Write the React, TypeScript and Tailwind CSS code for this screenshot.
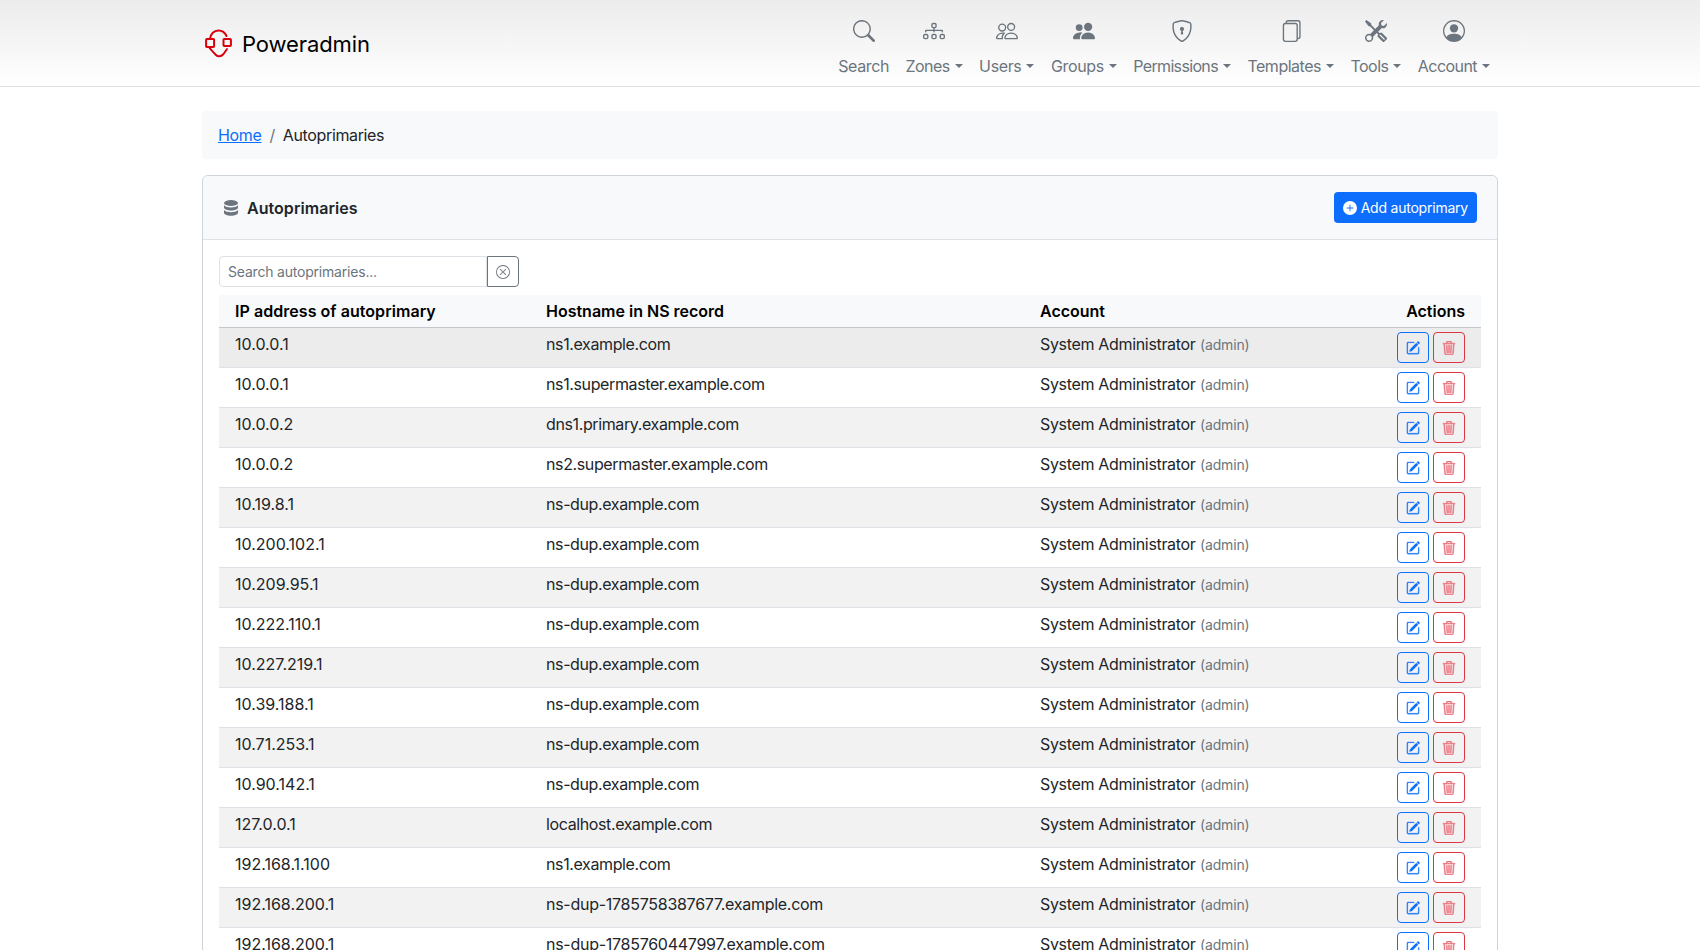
import React from 'react';
import {
    BsSearch,
    BsDiagram3,
    BsPeople,
    BsPeopleFill,
    BsShieldLock,
    BsFiles,
    BsTools,
    BsPersonCircle,
    BsPlusCircleFill,
    BsPencilSquare,
    BsTrash3,
    BsXCircle,
} from 'react-icons/bs';

const navItems = [
    { label: 'Search', icon: BsSearch, caret: false, tracking: 'tracking-[-0.36px]' },
    { label: 'Zones', icon: BsDiagram3, caret: true, tracking: 'tracking-[-0.58px]' },
    { label: 'Users', icon: BsPeople, caret: true, tracking: 'tracking-[-0.36px]' },
    { label: 'Groups', icon: BsPeopleFill, caret: true, tracking: 'tracking-[-0.36px]' },
    { label: 'Permissions', icon: BsShieldLock, caret: true, tracking: 'tracking-[-0.66px]' },
    { label: 'Templates', icon: BsFiles, caret: true, tracking: 'tracking-[-0.48px]' },
    { label: 'Tools', icon: BsTools, caret: true, tracking: 'tracking-[-0.56px]' },
    { label: 'Account', icon: BsPersonCircle, caret: true, tracking: 'tracking-[-0.56px]' },
];

const rows = [
    ['10.0.0.1', 'ns1.example.com'],
    ['10.0.0.1', 'ns1.supermaster.example.com'],
    ['10.0.0.2', 'dns1.primary.example.com'],
    ['10.0.0.2', 'ns2.supermaster.example.com'],
    ['10.19.8.1', 'ns-dup.example.com'],
    ['10.200.102.1', 'ns-dup.example.com'],
    ['10.209.95.1', 'ns-dup.example.com'],
    ['10.222.110.1', 'ns-dup.example.com'],
    ['10.227.219.1', 'ns-dup.example.com'],
    ['10.39.188.1', 'ns-dup.example.com'],
    ['10.71.253.1', 'ns-dup.example.com'],
    ['10.90.142.1', 'ns-dup.example.com'],
    ['127.0.0.1', 'localhost.example.com'],
    ['192.168.1.100', 'ns1.example.com'],
    ['192.168.200.1', 'ns-dup-1785758387677.example.com'],
    ['192.168.200.1', 'ns-dup-1785760447997.example.com'],
];

const Logo = () => (
    <svg width="27" height="29" viewBox="0 0 27 29" fill="none" stroke="#d8000c" strokeWidth="2" strokeLinecap="round">
        <rect x="1.1" y="10" width="8" height="8" rx="0.8" />
        <rect x="18.5" y="10" width="7.4" height="7" rx="0.8" />
        <path d="M5 10 C5.5 5 9 1.4 13.5 1.4 C17 1.4 20 3.5 21.5 7" />
        <path d="M4 18 C6 21 9 24 11 26 C13 28 16 27.6 18 25.5 C19.5 24 20.5 22 22 20" />
    </svg>
);

// three stacked bands, the package icon has four
const DatabaseIcon = () => (
    <svg width="14" height="16" viewBox="0 0 14 16" fill="#6c757d" className="ml-[1px]">
        <ellipse cx="7" cy="3" rx="7" ry="3" />
        <path d="M0 5.3 v2.2 c0 1.6 3.1 3 7 3 s7-1.4 7-3 V5.3 c-1.4 1.5-4 2.2-7 2.2 S1.4 6.8 0 5.3z" />
        <path d="M0 10 v2.8 c0 1.6 3.1 3 7 3 s7-1.4 7-3 V10 c-1.4 1.5-4 2.2-7 2.2 S1.4 11.5 0 10z" />
    </svg>
);

export default function App() {
    return (
        <div className="h-[950px] overflow-hidden bg-white text-[16px] text-[#212529] font-['Inter','Liberation_Sans',sans-serif]">
            <header className="h-[87px] border-b border-[#dee2e6] bg-gradient-to-b from-[#ececec] to-white">
                <div className="w-[1296px] h-full mx-auto flex items-center justify-between">
                    <div className="flex items-center gap-[10px] pt-[1px] pl-[3px]">
                        <Logo />
                        <span className="text-[22px] leading-[30px] text-black tracking-[-0.1px]">Poweradmin</span>
                    </div>
                    <nav className="flex self-start gap-[0.5px] text-[#6c757d]">
                        {navItems.map(item => {
                            const Icon = item.icon;
                            return (
                                <div key={item.label} className="flex flex-col items-center px-[8px] pt-[20px]">
                                    <Icon className="w-[22px] h-[22px] text-[#6c757d]" />
                                    <div className="flex items-center mt-[12px] leading-[24px]">
                                        <span className={item.tracking}>{item.label}</span>
                                        {item.caret && (
                                            <span className="ml-[5px] w-0 h-0 border-x-[4px] border-x-transparent border-t-[4px] border-t-[#6c757d]" />
                                        )}
                                    </div>
                                </div>
                            );
                        })}
                    </nav>
                </div>
            </header>

            <main className="w-[1296px] mx-auto pt-[24px]">
                <div className="h-[48px] flex items-center px-4 rounded bg-[#f8f9fa] tracking-[-0.36px]">
                    <a className="text-[#0d6efd] underline">Home</a>
                    <span className="px-[8px] text-[#6c757d]">/</span>
                    <span>Autoprimaries</span>
                </div>

                <section className="mt-4 border border-[#ced4da] rounded-md">
                    <div className="h-[64px] flex items-center justify-between px-5 bg-[#f8f9fa] border-b border-[#dee2e6] rounded-t-md">
                        <div className="flex items-center gap-[9px]">
                            <DatabaseIcon />
                            <strong className="font-semibold tracking-[0.05px]">Autoprimaries</strong>
                        </div>
                        <button className="h-[31px] flex items-center gap-[4px] px-[9px] rounded bg-[#0d6efd] text-white text-[14px] tracking-[-0.22px]">
                            <BsPlusCircleFill className="w-[14px] h-[14px]" />
                            Add autoprimary
                        </button>
                    </div>

                    <div className="px-4 pt-4">
                        <div className="flex w-[300px] h-[31px]">
                            <div className="flex-1 flex items-center px-[8px] border border-[#dee2e6] rounded-l text-[14px] text-[#6c757d] tracking-[-0.2px]">
                                Search autoprimaries...
                            </div>
                            <button className="w-[32px] flex items-center justify-center border border-[#6c757d] rounded-r text-[#6c757d]">
                                <BsXCircle className="w-[14px] h-[14px]" />
                            </button>
                        </div>

                        <table className="w-full mt-2 border-collapse table-fixed">
                            <thead>
                                <tr className="h-[32px] bg-[#f8f9fa] border-b border-[#c4c8cc] text-black text-left">
                                    <th className="w-[311px] px-4 font-semibold tracking-[0.05px]">IP address of autoprimary</th>
                                    <th className="w-[494px] px-4 font-semibold">Hostname in NS record</th>
                                    <th className="px-4 font-semibold">Account</th>
                                    <th className="w-[120px] px-4 text-right font-semibold">Actions</th>
                                </tr>
                            </thead>
                            <tbody>
                                {rows.map((row, i) => (
                                    <tr key={i} className={`h-[40px] border-b border-[#dee2e6] ${i === 0 ? 'bg-[#ececec]' : i % 2 === 0 ? 'bg-[#f2f2f2]' : 'bg-white'}`}>
                                        <td className="px-4 align-top pt-[4px]">{row[0]}</td>
                                        <td className={`px-4 align-top pt-[4px] ${row[1].includes('ns-dup-') ? 'tracking-[-0.27px]' : 'tracking-[-0.38px]'}`}>{row[1]}</td>
                                        <td className="px-4 align-top pt-[4px]">
                                            <span className="tracking-[-0.33px]">System Administrator</span> <span className="text-[14px] text-[#6c757d] tracking-[-0.15px]">(admin)</span>
                                        </td>
                                        <td className="px-4 align-top pt-[4px]">
                                            <div className="flex justify-end gap-[4px]">
                                                <button className="w-[32px] h-[31px] pt-[1px] flex items-center justify-center border border-[#0d6efd] rounded text-[#0d6efd]">
                                                    <BsPencilSquare className="w-[14px] h-[14px]" stroke="currentColor" strokeWidth="0.3" />
                                                </button>
                                                <button className="w-[32px] h-[31px] pt-[1px] flex items-center justify-center border border-[#dc3545] rounded text-[#e8747f]">
                                                    <BsTrash3 className="w-[14px] h-[14px]" stroke="currentColor" strokeWidth="0.6" />
                                                </button>
                                            </div>
                                        </td>
                                    </tr>
                                ))}
                            </tbody>
                        </table>
                    </div>
                </section>
            </main>
        </div>
    );
}
